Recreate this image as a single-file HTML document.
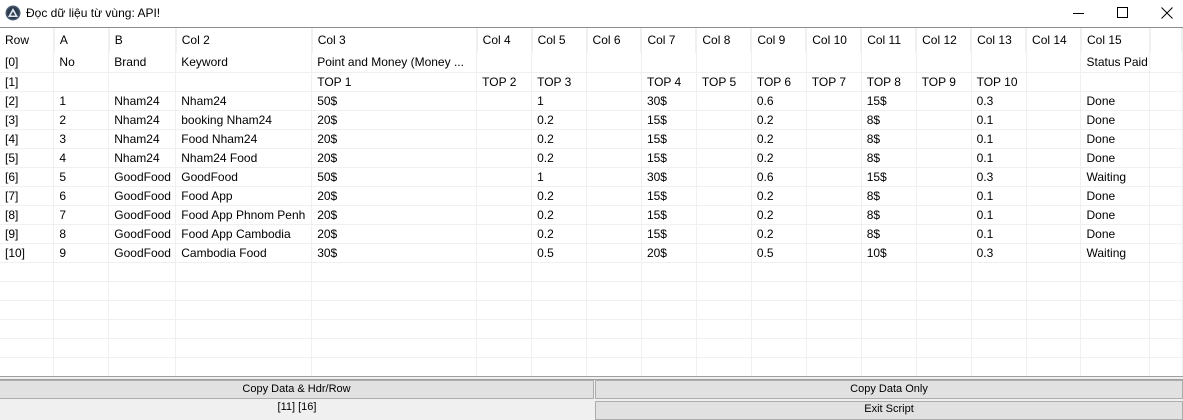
<!DOCTYPE html>
<html><head><meta charset="utf-8">
<style>
*{margin:0;padding:0;box-sizing:border-box}
body{width:1183px;height:413px;overflow:hidden;background:#f0f0f0;font-family:"Liberation Sans",sans-serif;font-size:12px;color:#000;position:relative}
#title{position:absolute;left:0;top:0;width:1183px;height:28px;background:#fff;border-bottom:1px solid #8c8c8c}
#title .t{position:absolute;left:26px;top:6px;font-size:12px}
#grid{position:absolute;left:0;top:28px;width:1183px;height:349px;background:#fff;overflow:hidden;border-bottom:1px solid #a0a0a0}
table{border-collapse:collapse;table-layout:fixed}
td{height:19px;border-right:1px solid #f0f0f0;border-bottom:1px solid #f0f0f0;padding:0 0 0 5px;white-space:nowrap;overflow:hidden;line-height:18px}
tr.h td{height:25px;border-bottom:none;border-right:2px solid #f0f0f0;line-height:25px}
.btn{position:absolute;background:#e1e1e1;border:1px solid #adadad;text-align:center;font-size:11px;line-height:17px}
</style></head><body>
<div id="title">
<svg style="position:absolute;left:5px;top:5px" width="16" height="16" viewBox="0 0 16 16"><circle cx="8" cy="8" r="7.5" fill="#4a5a70"/><circle cx="8" cy="8" r="6" fill="#2c3a4e"/><path d="M8 3 L13 12 H3 Z" fill="#dfe6ee"/><path d="M8 6.5 L10.3 10.5 H5.7 Z" fill="#2c3a4e"/></svg>
<span class="t">Đọc dữ liệu từ vùng: API!</span>
<span style="position:absolute;left:1073px;top:13px;width:11px;height:1px;background:#000"></span>
<span style="position:absolute;left:1117px;top:7px;width:11px;height:11px;border:1px solid #000"></span>
<svg style="position:absolute;left:1161px;top:7px" width="12" height="12"><path d="M0.5 0.5L11.5 11.5M11.5 0.5L0.5 11.5" stroke="#000" stroke-width="1"/></svg>
</div>
<div id="grid">
<table>
<colgroup><col style="width:54px"><col style="width:55px"><col style="width:67px"><col style="width:136px"><col style="width:165px"><col style="width:55px"><col style="width:55px"><col style="width:55px"><col style="width:55px"><col style="width:55px"><col style="width:55px"><col style="width:55px"><col style="width:55px"><col style="width:55px"><col style="width:55px"><col style="width:55px"><col style="width:69px"><col style="width:32px"></colgroup>
<tr class="h"><td>Row</td><td>A</td><td>B</td><td>Col 2</td><td>Col 3</td><td>Col 4</td><td>Col 5</td><td>Col 6</td><td>Col 7</td><td>Col 8</td><td>Col 9</td><td>Col 10</td><td>Col 11</td><td>Col 12</td><td>Col 13</td><td>Col 14</td><td>Col 15</td><td></td></tr>
<tr><td>[0]</td><td>No</td><td>Brand</td><td>Keyword</td><td>Point and Money (Money ...</td><td></td><td></td><td></td><td></td><td></td><td></td><td></td><td></td><td></td><td></td><td></td><td>Status Paid</td><td></td></tr>
<tr><td>[1]</td><td></td><td></td><td></td><td>TOP 1</td><td>TOP 2</td><td>TOP 3</td><td></td><td>TOP 4</td><td>TOP 5</td><td>TOP 6</td><td>TOP 7</td><td>TOP 8</td><td>TOP 9</td><td>TOP 10</td><td></td><td></td><td></td></tr>
<tr><td>[2]</td><td>1</td><td>Nham24</td><td>Nham24</td><td>50$</td><td></td><td>1</td><td></td><td>30$</td><td></td><td>0.6</td><td></td><td>15$</td><td></td><td>0.3</td><td></td><td>Done</td><td></td></tr>
<tr><td>[3]</td><td>2</td><td>Nham24</td><td>booking Nham24</td><td>20$</td><td></td><td>0.2</td><td></td><td>15$</td><td></td><td>0.2</td><td></td><td>8$</td><td></td><td>0.1</td><td></td><td>Done</td><td></td></tr>
<tr><td>[4]</td><td>3</td><td>Nham24</td><td>Food Nham24</td><td>20$</td><td></td><td>0.2</td><td></td><td>15$</td><td></td><td>0.2</td><td></td><td>8$</td><td></td><td>0.1</td><td></td><td>Done</td><td></td></tr>
<tr><td>[5]</td><td>4</td><td>Nham24</td><td>Nham24 Food</td><td>20$</td><td></td><td>0.2</td><td></td><td>15$</td><td></td><td>0.2</td><td></td><td>8$</td><td></td><td>0.1</td><td></td><td>Done</td><td></td></tr>
<tr><td>[6]</td><td>5</td><td>GoodFood</td><td>GoodFood</td><td>50$</td><td></td><td>1</td><td></td><td>30$</td><td></td><td>0.6</td><td></td><td>15$</td><td></td><td>0.3</td><td></td><td>Waiting</td><td></td></tr>
<tr><td>[7]</td><td>6</td><td>GoodFood</td><td>Food App</td><td>20$</td><td></td><td>0.2</td><td></td><td>15$</td><td></td><td>0.2</td><td></td><td>8$</td><td></td><td>0.1</td><td></td><td>Done</td><td></td></tr>
<tr><td>[8]</td><td>7</td><td>GoodFood</td><td>Food App Phnom Penh</td><td>20$</td><td></td><td>0.2</td><td></td><td>15$</td><td></td><td>0.2</td><td></td><td>8$</td><td></td><td>0.1</td><td></td><td>Done</td><td></td></tr>
<tr><td>[9]</td><td>8</td><td>GoodFood</td><td>Food App Cambodia</td><td>20$</td><td></td><td>0.2</td><td></td><td>15$</td><td></td><td>0.2</td><td></td><td>8$</td><td></td><td>0.1</td><td></td><td>Done</td><td></td></tr>
<tr><td>[10]</td><td>9</td><td>GoodFood</td><td>Cambodia Food</td><td>30$</td><td></td><td>0.5</td><td></td><td>20$</td><td></td><td>0.5</td><td></td><td>10$</td><td></td><td>0.3</td><td></td><td>Waiting</td><td></td></tr>
<tr><td></td><td></td><td></td><td></td><td></td><td></td><td></td><td></td><td></td><td></td><td></td><td></td><td></td><td></td><td></td><td></td><td></td><td></td></tr>
<tr><td></td><td></td><td></td><td></td><td></td><td></td><td></td><td></td><td></td><td></td><td></td><td></td><td></td><td></td><td></td><td></td><td></td><td></td></tr>
<tr><td></td><td></td><td></td><td></td><td></td><td></td><td></td><td></td><td></td><td></td><td></td><td></td><td></td><td></td><td></td><td></td><td></td><td></td></tr>
<tr><td></td><td></td><td></td><td></td><td></td><td></td><td></td><td></td><td></td><td></td><td></td><td></td><td></td><td></td><td></td><td></td><td></td><td></td></tr>
<tr><td></td><td></td><td></td><td></td><td></td><td></td><td></td><td></td><td></td><td></td><td></td><td></td><td></td><td></td><td></td><td></td><td></td><td></td></tr>
<tr><td></td><td></td><td></td><td></td><td></td><td></td><td></td><td></td><td></td><td></td><td></td><td></td><td></td><td></td><td></td><td></td><td></td><td></td></tr>
</table>
</div>
<div style="position:absolute;left:0;top:379px;width:1183px;height:1px;background:#a0a0a0"></div>
<div class="btn" style="left:-1px;top:380px;width:595px;height:19px">Copy Data &amp; Hdr/Row</div>
<div class="btn" style="left:595px;top:380px;width:588px;height:19px">Copy Data Only</div>
<div style="position:absolute;left:0;top:400px;width:594px;text-align:center;font-size:11px;line-height:14px">[11] [16]</div>
<div class="btn" style="left:595px;top:401px;width:588px;height:19px;line-height:15px">Exit Script</div>
</body></html>
